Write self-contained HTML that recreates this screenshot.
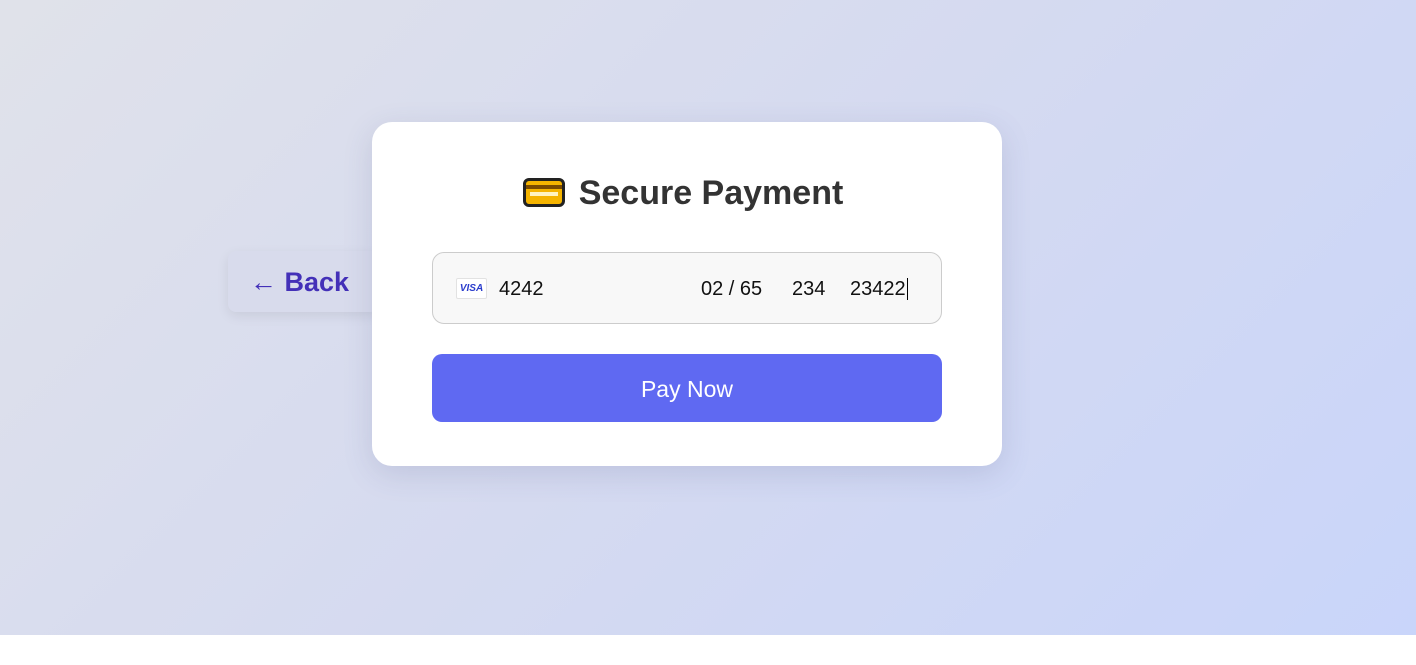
<!DOCTYPE html>
<html><head><style>
*{margin:0;padding:0;box-sizing:border-box}
body{width:1416px;height:665px;background:#fff;font-family:"Liberation Sans",sans-serif;position:relative;overflow:hidden}
.bg{position:absolute;left:0;top:0;width:1416px;height:635px;background:linear-gradient(135deg,#e0e2ea 0%,#d5daf0 50%,#c9d5fa 100%)}
.back{position:absolute;left:228px;top:251px;width:150px;height:61px;border-radius:8px;background:#d8dbec;box-shadow:0 4px 12px rgba(0,0,0,.08);color:#4330b8;font-weight:bold;font-size:27px;padding:16px 0 0 22px}
.card{position:absolute;left:372px;top:122px;width:630px;height:344px;background:#fff;border-radius:20px;box-shadow:0 8px 30px rgba(60,70,120,.15)}
h1{position:absolute;left:-4px;width:630px;top:52px;text-align:center;font-size:34px;color:#333;font-weight:bold}
.ic{display:inline-block;width:42px;height:29px;background:#f5b400;border:3px solid #222;border-radius:6px;vertical-align:-3px;margin-right:14px;position:relative}
.ic:before{content:"";position:absolute;left:0;right:0;top:4px;height:4px;background:#7a4a00}
.ic:after{content:"";position:absolute;left:4px;right:4px;top:11px;height:4px;background:#fff3c0}
.inp{position:absolute;left:60px;top:130px;width:510px;height:72px;background:#f8f8f8;border:1px solid #ccc;border-radius:12px;font-size:20px;color:#111}
.t{position:absolute;top:25px}
.cur{position:absolute;left:474px;top:25px;width:1px;height:22px;background:#000}
.visa{position:absolute;left:23px;top:25px;width:31px;height:21px;background:#fff;border:1px solid #e2e2e2;border-radius:2px;color:#2a3ccc;font-size:10px;font-weight:bold;font-style:italic;text-align:center;line-height:20px}
.btn{position:absolute;left:60px;top:232px;width:510px;height:68px;background:#5f69f2;border-radius:10px;color:#fff;font-size:23px;text-align:center;line-height:70px}
</style></head><body>
<div class="bg"></div>
<div class="back">← Back</div>
<div class="card">
<h1><span class="ic"></span>Secure Payment</h1>
<div class="inp"><div class="visa">VISA</div><span class="t" style="left:66px">4242</span><span class="t" style="left:268px">02 / 65</span><span class="t" style="left:359px">234</span><span class="t" style="left:417px">23422</span><div class="cur"></div></div>
<div class="btn">Pay Now</div>
</div>
</body></html>
